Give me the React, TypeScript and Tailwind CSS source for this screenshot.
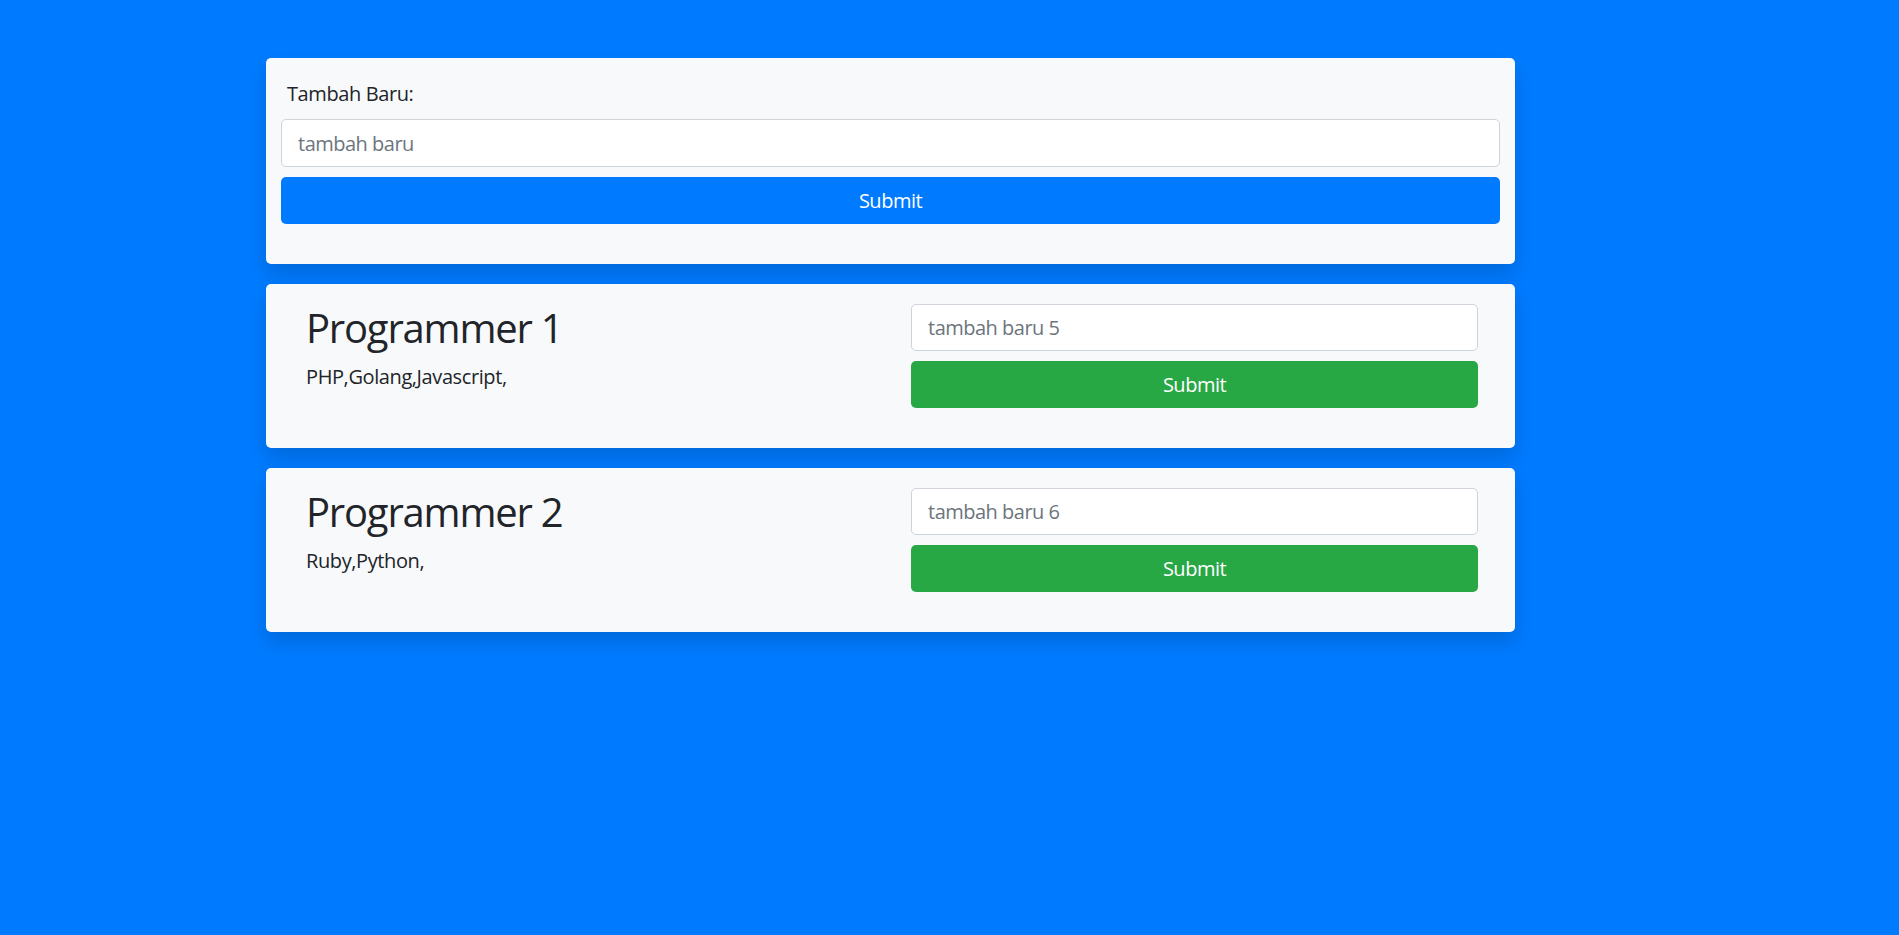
import React from "react";

const programmers = [
  { name: "Programmer 1", skills: "PHP,Golang,Javascript,", placeholder: "tambah baru 5" },
  { name: "Programmer 2", skills: "Ruby,Python,", placeholder: "tambah baru 6" },
];

export default function App() {
  return (
    <div className="min-h-screen w-full bg-[#007bff] font-['Open_Sans',sans-serif] tracking-[-0.025em] text-[#212529]">
      <div className="ml-[266px] flex w-[1249px] flex-col gap-[20px] pt-[58px]">
        <div className="rounded-[5px] bg-[#f8f9fa] px-[15px] pb-[40px] pt-[21px] shadow-[0_10px_20px_rgba(0,0,0,0.15)]">
          <label className="mb-[10px] ml-[6px] block text-[20px] leading-[30px]">Tambah Baru:</label>
          <input
            type="text"
            placeholder="tambah baru"
            className="block h-[48px] w-full rounded-[5px] border border-[#ced4da] bg-white px-[16px] text-[20px] tracking-[-0.025em] text-[#495057] outline-none placeholder:text-[#6c757d]"
          />
          <button className="mt-[10px] block h-[47px] w-full rounded-[5px] bg-[#007bff] text-[20px] tracking-[-0.025em] text-white">
            Submit
          </button>
        </div>
        {programmers.map((p) => (
          <div
            key={p.name}
            className="flex rounded-[5px] bg-[#f8f9fa] pb-[40px] pl-[40px] pr-[37px] pt-[20px] shadow-[0_10px_20px_rgba(0,0,0,0.15)]"
          >
            <div className="w-[605px] shrink-0">
              <h2 className="mb-[10px] text-[40px] font-normal leading-[48px] tracking-[-0.03em]">{p.name}</h2>
              <p className="text-[20px] leading-[30px]">{p.skills}</p>
            </div>
            <div className="flex-1">
              <input
                type="text"
                placeholder={p.placeholder}
                className="block h-[47px] w-full rounded-[5px] border border-[#ced4da] bg-white px-[16px] text-[20px] tracking-[-0.025em] text-[#495057] outline-none placeholder:text-[#6c757d]"
              />
              <button className="mt-[10px] block h-[47px] w-full rounded-[5px] bg-[#28a745] text-[20px] tracking-[-0.025em] text-white">
                Submit
              </button>
            </div>
          </div>
        ))}
      </div>
    </div>
  );
}
